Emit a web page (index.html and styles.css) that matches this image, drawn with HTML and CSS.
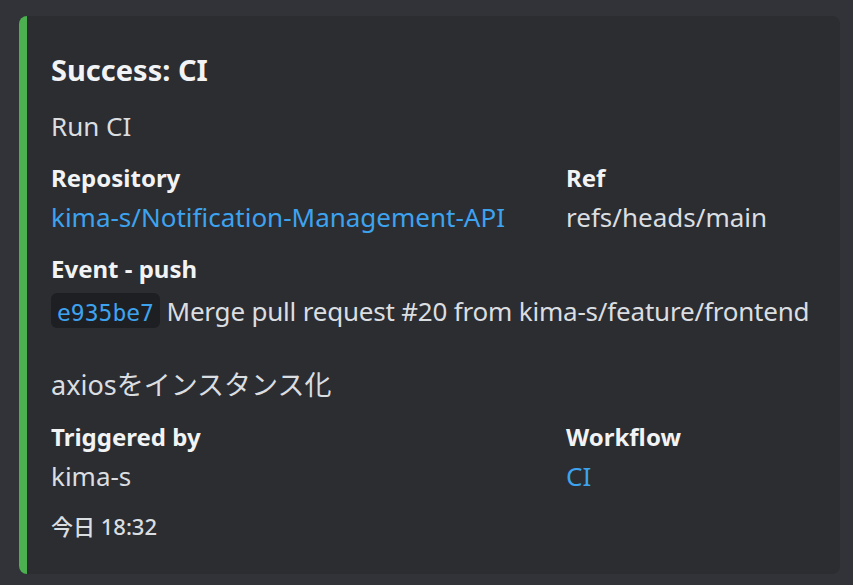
FILE: index.html
```html
<!DOCTYPE html>
<html lang="ja">
<head>
<meta charset="utf-8">
<title>Success: CI</title>
<link rel="stylesheet" href="styles.css">
</head>
<body>
<div class="embed">
  <div class="title">Success: CI</div>
  <div class="desc">Run CI</div>
  <div class="fields">
    <div class="field">
      <div class="fname">Repository</div>
      <div class="fval"><a class="link" href="#">kima-s/Notification-Management-API</a></div>
    </div>
    <div class="field">
      <div class="fname">Ref</div>
      <div class="fval">refs/heads/main</div>
    </div>
    <div class="field full">
      <div class="fname">Event - push</div>
      <div class="fval commit"><span class="line"><code class="code">e935be7</code> Merge pull request #20 from kima-s/feature/frontend</span><br><br><span class="jp">axiosをインスタンス化</span></div>
    </div>
    <div class="field">
      <div class="fname">Triggered by</div>
      <div class="fval">kima-s</div>
    </div>
    <div class="field">
      <div class="fname">Workflow</div>
      <div class="fval"><a class="link" href="#">CI</a></div>
    </div>
  </div>
  <div class="footer">今日 18:32</div>
</div>
</body>
</html>
```
FILE: styles.css
```css
html, body {
  margin: 0;
  padding: 0;
  background: #313338;
}
body {
  font-family: "Noto Sans", "Noto Sans CJK JP", sans-serif;
  color: #dbdee1;
}
.embed {
  margin: 16px 13px 12px 19px;
  background: #2b2d31;
  border-left: 8px solid #4caf50;
  border-radius: 8px;
  padding: 32px 16px 32px 24px;
}
.title {
  font-size: 29px;
  font-weight: 700;
  line-height: 44px;
  color: #f2f3f5;
}
.desc {
  margin-top: 16px;
  font-size: 26px;
  line-height: 36px;
  color: #dbdee1;
}
.fields {
  margin-top: 16px;
  display: grid;
  grid-template-columns: 515px 1fr;
  row-gap: 16px;
}
.full {
  grid-column: 1 / -1;
}
.fname {
  font-size: 24px;
  font-weight: 700;
  line-height: 36px;
  color: #f2f3f5;
  margin-bottom: 3px;
}
.fval {
  font-size: 26px;
  line-height: 36px;
  color: #dbdee1;
}
.commit {
  padding-top: 3px;
}
.line {
  white-space: nowrap;
  letter-spacing: -0.2px;
}
.jp {
  font-size: 27px;
}
.link {
  color: #3ea3ef;
  text-decoration: none;
}
.code {
  font-family: "DejaVu Sans Mono", monospace;
  font-size: 23px;
  letter-spacing: 0;
  color: #3ea3ef;
  background: #1e1f22;
  border-radius: 6px;
  padding: 7px 6px 2px;
}
.footer {
  margin-top: 16px;
  font-family: "Noto Sans", "Noto Sans CJK JP", sans-serif;
  font-size: 22px;
  font-weight: 500;
  line-height: 32px;
  color: #dbdee1;
}
```
